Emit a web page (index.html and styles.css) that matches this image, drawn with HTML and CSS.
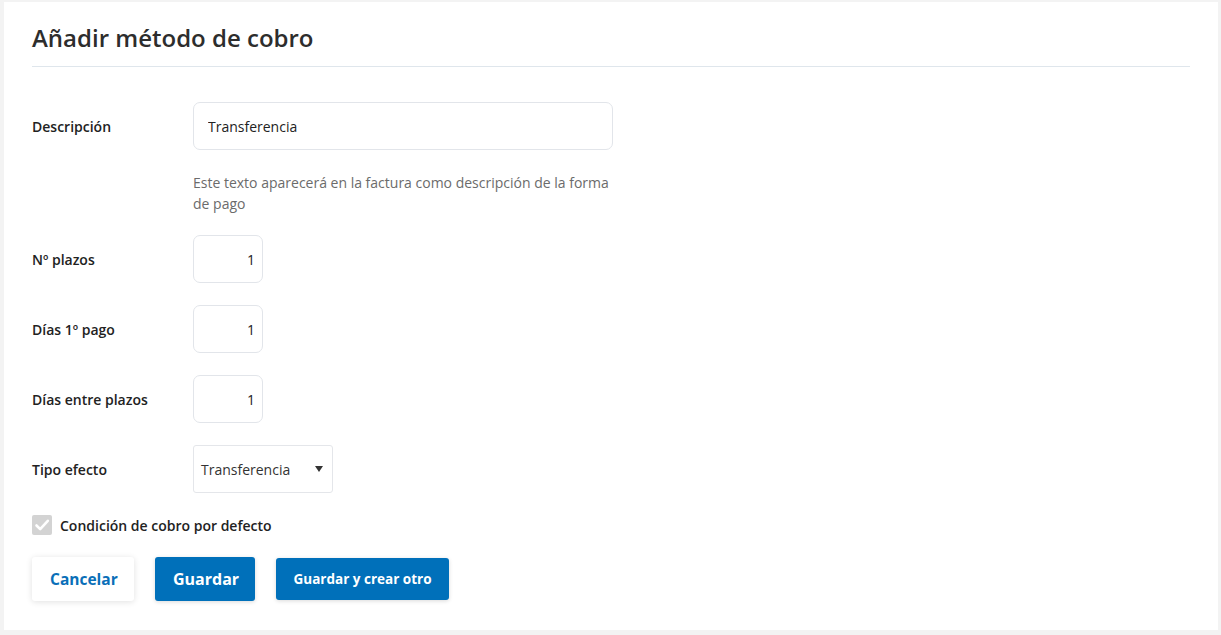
FILE: index.html
```html
<!DOCTYPE html>
<html lang="es">
<head>
<meta charset="utf-8">
<title>Añadir método de cobro</title>
<link rel="stylesheet" href="styles.css">
</head>
<body>
<div class="card">
  <h1 class="title">Añadir método de cobro</h1>
  <div class="divider"></div>
  <form class="form">
    <div class="row">
      <label class="label">Descripción</label>
      <div class="field">
        <input class="input input-wide" type="text" value="Transferencia">
      </div>
    </div>
    <p class="help">Este texto aparecerá en la factura como descripción de la forma de pago</p>
    <div class="row">
      <label class="label">Nº plazos</label>
      <div class="field"><input class="input input-num" type="text" value="1"></div>
    </div>
    <div class="row">
      <label class="label">Días 1º pago</label>
      <div class="field"><input class="input input-num" type="text" value="1"></div>
    </div>
    <div class="row">
      <label class="label">Días entre plazos</label>
      <div class="field"><input class="input input-num" type="text" value="1"></div>
    </div>
    <div class="row">
      <label class="label">Tipo efecto</label>
      <div class="field">
        <div class="select">
          <span class="select-text">Transferencia</span>
          <span class="select-arrow"></span>
        </div>
      </div>
    </div>
    <div class="check-row">
      <span class="checkbox">
        <svg width="20" height="20" viewBox="0 0 20 20"><path d="M4.5 10.5 L8.2 14.2 L15.8 5.8" fill="none" stroke="#ffffff" stroke-width="2.6" stroke-linecap="round" stroke-linejoin="round"/></svg>
      </span>
      <span class="check-label">Condición de cobro por defecto</span>
    </div>
    <div class="actions">
      <button type="button" class="btn btn-light">Cancelar</button>
      <button type="button" class="btn btn-primary">Guardar</button>
      <button type="button" class="btn btn-primary btn-small">Guardar y crear otro</button>
    </div>
  </form>
</div>
</body>
</html>
```
FILE: styles.css
```css
* { box-sizing: border-box; }
html, body { margin: 0; padding: 0; }
body {
  background: #f3f3f3;
  font-family: "Open Sans", "Noto Sans", sans-serif;
  color: #2b2b2b;
  padding: 2px 3px 5px 4px;
  height: 635px;
}
.card {
  background: #ffffff;
  height: 628px;
  padding: 20px 28px 0 28px;
}
.title {
  margin: 0;
  font-size: 24px;
  font-weight: 600;
  line-height: 32px;
  color: #2d2d2d;
  letter-spacing: 0;
}
.divider {
  height: 1px;
  background: #dfe6ec;
  margin-top: 12px;
}
.form { padding-top: 35px; }
.row {
  display: flex;
  align-items: center;
  height: 48px;
  margin-bottom: 22px;
}
.label {
  width: 161px;
  flex: none;
  font-size: 14px;
  font-weight: 600;
  color: #222;
}
.input {
  height: 48px;
  border: 1px solid #e2e5ea;
  border-radius: 7px;
  font-family: inherit;
  font-size: 14px;
  color: #222;
  background: #fff;
  outline: none;
}
.input-wide { width: 420px; padding: 0 14px; }
.input-num { width: 70px; padding: 0 7px; text-align: right; }
.row:has(.input-wide) { margin-bottom: 0; }
.help {
  margin: 22px 0 21px 161px;
  width: 425px;
  font-size: 14px;
  line-height: 21px;
  color: #6b6b6b;
}
.select {
  width: 140px;
  height: 48px;
  border: 1px solid #e4e6ea;
  border-radius: 3px;
  display: flex;
  align-items: center;
  justify-content: space-between;
  padding: 0 9px 0 7px;
  font-size: 14px;
  color: #333;
}
.select-arrow {
  width: 0; height: 0;
  border-left: 4px solid transparent;
  border-right: 4px solid transparent;
  border-top: 6px solid #333;
}
.check-row {
  display: flex;
  align-items: center;
  gap: 8px;
  margin-top: 0;
}
.checkbox {
  width: 20px; height: 20px;
  background: #d3d3d3;
  border-radius: 2px;
  display: inline-flex;
}
.check-label { font-size: 14px; font-weight: 600; color: #222; }
.actions {
  display: flex;
  align-items: center;
  gap: 21px;
  margin-top: 22px;
}
.btn {
  height: 44px;
  border: none;
  border-radius: 3px;
  font-family: inherit;
  font-weight: 700;
  font-size: 16px;
  padding: 0 18px;
  cursor: pointer;
}
.btn-light {
  background: #fff;
  color: #0a6fb8;
  width: 102px;
  font-size: 15.5px;
  box-shadow: 0 1px 6px rgba(0,0,0,0.12);
}
.btn-primary {
  background: #0070ba;
  color: #fff;
  width: 100px;
  box-shadow: 0 1px 4px rgba(0,0,0,0.15);
}
.btn-small {
  height: 42px;
  width: 173px;
  font-size: 13.5px;
  padding: 0 10px;
}
```
